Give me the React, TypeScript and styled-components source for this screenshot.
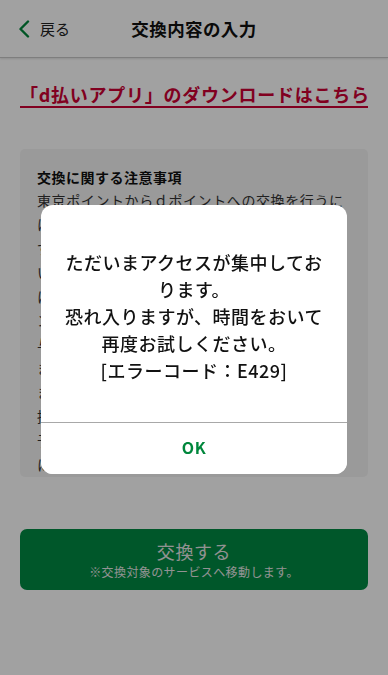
import React from "react";
import styled, { createGlobalStyle } from "styled-components";

const GlobalStyle = createGlobalStyle`
  html, body { margin: 0; padding: 0; }
  body {
    font-family: "Noto Sans CJK JP", "Noto Sans", sans-serif;
    background: #ffffff;
    color: #222222;
  }
  * { box-sizing: border-box; }
`;

const Page = styled.div`
  width: 388px;
  min-height: 675px;
  background: #ffffff;
  display: flex;
  flex-direction: column;
`;

const Header = styled.header`
  height: 58px;
  display: grid;
  grid-template-columns: 1fr auto 1fr;
  align-items: center;
  border-bottom: 1px solid #c8c8c8;
  box-shadow: 0 1px 2px rgba(0, 0, 0, 0.12);
`;

const Back = styled.div`
  display: flex;
  align-items: center;
  gap: 10px;
  padding-left: 18px;
  font-size: 15px;
  color: #222;
`;

const Title = styled.h1`
  margin: 0;
  font-size: 17.5px;
  font-weight: 700;
  letter-spacing: 0.4px;
  color: #111;
`;

const Content = styled.main`
  padding: 24px 20px 0;
  display: flex;
  flex-direction: column;
`;

const AppLink = styled.a`
  display: block;
  font-size: 18px;
  line-height: 24px;
  font-weight: 700;
  letter-spacing: 0.75px;
  color: #cc0033;
  text-decoration: none;
  border-bottom: 2px solid #cc0033;
  white-space: nowrap;
  padding-left: 0;
`;

const NoteCard = styled.section`
  margin-top: 41px;
  height: 328px;
  overflow: hidden;
  background: #f4f4f4;
  border-radius: 5px;
  padding: 18px 17px 0;
`;

const NoteTitle = styled.h2`
  margin: 0;
  font-size: 14px;
  line-height: 20px;
  font-weight: 700;
  letter-spacing: 0.5px;
  color: #111;
`;

const NoteBody = styled.p`
  margin: 1px 0 0;
  font-size: 14px;
  line-height: 24px;
  letter-spacing: 0.6px;
  color: #333;
`;

const ExchangeButton = styled.button`
  margin-top: 52px;
  height: 61px;
  width: 100%;
  border: none;
  border-radius: 7px;
  background: #008a43;
  color: #e8e8e8;
  display: flex;
  flex-direction: column;
  align-items: center;
  justify-content: center;
  font-family: inherit;
  padding: 0;
`;

const ButtonMain = styled.span`
  font-size: 18px;
  line-height: 24px;
  letter-spacing: 0.6px;
`;

const ButtonSub = styled.span`
  font-size: 12px;
  line-height: 18px;
  letter-spacing: 0.4px;
`;

const Overlay = styled.div`
  position: fixed;
  inset: 0;
  background: rgba(0, 0, 0, 0.37);
  display: flex;
  align-items: center;
  justify-content: center;
`;

const Dialog = styled.div`
  width: 306px;
  margin-top: 3px;
  background: #ffffff;
  border-radius: 12px;
  overflow: hidden;
  display: flex;
  flex-direction: column;
`;

const Message = styled.p`
  margin: 0;
  padding: 44px 18px 38px;
  text-align: center;
  font-size: 18px;
  line-height: 27px;
  font-weight: 500;
  letter-spacing: 0.5px;
  color: #111;
`;

const DialogAction = styled.button`
  height: 52px;
  border: none;
  border-top: 1px solid #a8a8a8;
  background: #ffffff;
  color: #00873c;
  font-family: "Noto Sans CJK JP", "Noto Sans", sans-serif;
  font-size: 16px;
  font-weight: 700;
  letter-spacing: 0.5px;
  padding: 0 0 2px;
`;

const Chevron = () => (
  <svg width="12" height="18" viewBox="0 0 12 18" fill="none">
    <path d="M10 1.5L2.5 9L10 16.5" stroke="#00873c" strokeWidth="2.4" strokeLinecap="round" strokeLinejoin="round" />
  </svg>
);

export default function App() {
  return (
    <>
      <GlobalStyle />
      <Page>
        <Header>
          <Back>
            <Chevron />
            <span>戻る</span>
          </Back>
          <Title>交換内容の入力</Title>
          <div />
        </Header>
        <Content>
          <AppLink href="#">「d払いアプリ」のダウンロードはこちら</AppLink>
          <NoteCard>
            <NoteTitle>交換に関する注意事項</NoteTitle>
            <NoteBody>
              東京ポイントからｄポイントへの交換を行うには、dアカウントでのログインが必要です。
              必ずご本人のdアカウントでログインしてください。
              交換後のキャンセルや変更はできません。
              に交換したｄポイントは、期間・用途限定ポイントとなります。
              交換申請後、ｄポイントが付与されるまでに
              一定の時間がかかる場合があります。
              交換の上限は1回あたり10,000ポイントまで
              （1ポイント単位）です。
              日によっては交換に時間がかかる場合があります。
              都合により予告なく交換を停止する場合があります。
              交換に関するお問い合わせは各サービスへお願いします。
              イベント期間中はアクセスが集中することがあります。
            </NoteBody>
          </NoteCard>
          <ExchangeButton>
            <ButtonMain>交換する</ButtonMain>
            <ButtonSub>※交換対象のサービスへ移動します。</ButtonSub>
          </ExchangeButton>
        </Content>
      </Page>
      <Overlay>
        <Dialog>
          <Message>
            ただいまアクセスが集中しております。
            <br />
            恐れ入りますが、時間をおいて
            <br />
            再度お試しください。
            <br />
            [エラーコード：E429]
          </Message>
          <DialogAction>OK</DialogAction>
        </Dialog>
      </Overlay>
    </>
  );
}
